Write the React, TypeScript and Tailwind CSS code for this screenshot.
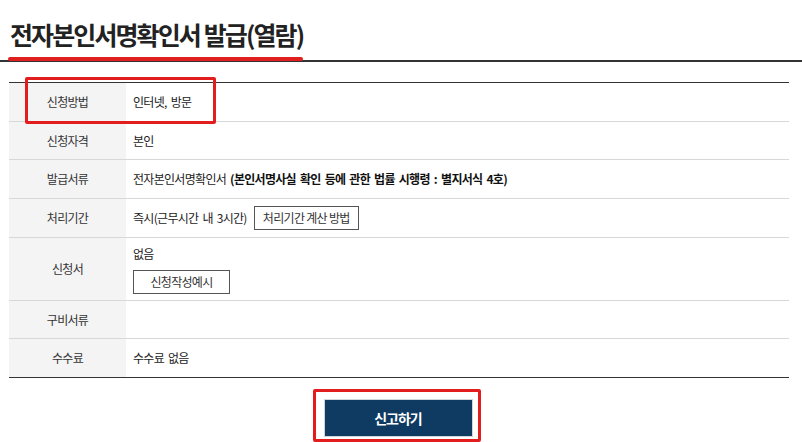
import React from "react";

const rows: { label: string; h: string; last?: boolean; content: React.ReactNode }[] = [
  { label: "신청방법", h: "h-[38px]", content: "인터넷, 방문" },
  { label: "신청자격", h: "h-[37px]", content: "본인" },
  {
    label: "발급서류",
    h: "h-[38px]",
    content: (
      <>
        전자본인서명확인서&nbsp;
        <b className="font-bold text-[#111]">(본인서명사실 확인 등에 관한 법률 시행령 : 별지서식 4호)</b>
      </>
    ),
  },
  {
    label: "처리기간",
    h: "h-[38px]",
    content: (
      <div className="flex items-center">
        <span>즉시(근무시간 내 3시간)</span>
        <button className="ml-[7px] h-[24px] w-[105px] border border-[#555] bg-white text-[12px] leading-[22px] tracking-[-0.7px] text-[#333] [word-spacing:0px]">
          처리기간 계산 방법
        </button>
      </div>
    ),
  },
  {
    label: "신청서",
    h: "h-[62px]",
    content: (
      <div className="flex flex-col items-start">
        <span>없음</span>
        <button className="mt-[7px] h-[24px] w-[97px] border border-[#555] bg-white text-[12px] leading-[22px] tracking-[-0.7px] text-[#333]">
          신청작성예시
        </button>
      </div>
    ),
  },
  { label: "구비서류", h: "h-[37px]", content: null },
  { label: "수수료", h: "h-[38px]", last: true, content: "수수료 없음" },
];

export default function App() {
  return (
    <div
      className="relative h-[442px] w-[802px] overflow-hidden bg-white text-[#222]"
      style={{ fontFamily: '"Noto Sans CJK KR", "Noto Sans", sans-serif' }}
    >
      {/* 제목 */}
      <div className="relative border-b-2 border-[#333] pt-[16px] pb-[8px]">
        <h2 className="pl-[10px] text-[25px] font-bold leading-[36px] tracking-[-1.9px] text-[#222]">
          전자본인서명확인서 발급(열람)
        </h2>
        <span className="absolute bottom-[-1px] left-[8px] h-[4px] w-[295px] rounded-full bg-[#e01f1f]"></span>
      </div>

      {/* 표 */}
      <div className="mt-[20px] ml-[9px] w-[780px] border-t border-b border-[#333] text-[12px] tracking-[-0.7px] [word-spacing:2px]">
        {rows.map((r) => (
          <div
            key={r.label}
            className={`flex ${r.last ? "" : "border-b border-[#d8d8d8]"}`}
          >
            <div
              className={`flex w-[117px] shrink-0 items-center justify-center bg-[#f4f4f4] text-[#333] ${r.h}`}
            >
              {r.label}
            </div>
            <div className="flex flex-1 items-center pl-[7px] text-[#222]">{r.content}</div>
          </div>
        ))}
      </div>

      {/* 버튼 */}
      <div className="mt-[21px] ml-[9px] flex w-[780px] justify-center">
        <button className="ml-[-2px] h-[38px] w-[149px] border border-[#d0d6dc] bg-[#0f3a62] text-[14px] font-bold tracking-[-1px] text-white">
          신고하기
        </button>
      </div>

      {/* 강조 표시 */}
      <div className="absolute left-[25px] top-[77px] h-[47px] w-[191px] rounded-[2px] border-[3px] border-[#e31d1d]"></div>
      <div className="absolute left-[313px] top-[389px] h-[53px] w-[168px] rounded-[2px] border-[3px] border-[#e31d1d]"></div>
    </div>
  );
}
